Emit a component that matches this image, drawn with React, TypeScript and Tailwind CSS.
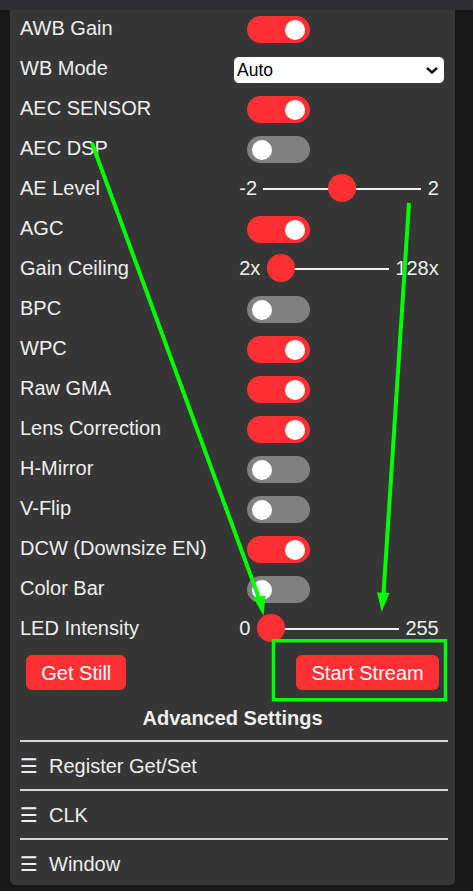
type Row =
  | { label: string; kind: 'toggle'; on: boolean }
  | { label: string; kind: 'select' }
  | { label: string; kind: 'range'; min: number; max: number; value: number; lo: string; hi: string };

const rows: Row[] = [
  { label: 'AWB Gain', kind: 'toggle', on: true },
  { label: 'WB Mode', kind: 'select' },
  { label: 'AEC SENSOR', kind: 'toggle', on: true },
  { label: 'AEC DSP', kind: 'toggle', on: false },
  { label: 'AE Level', kind: 'range', min: -2, max: 2, value: 0, lo: '-2', hi: '2' },
  { label: 'AGC', kind: 'toggle', on: true },
  { label: 'Gain Ceiling', kind: 'range', min: 0, max: 6, value: 0, lo: '2x', hi: '128x' },
  { label: 'BPC', kind: 'toggle', on: false },
  { label: 'WPC', kind: 'toggle', on: true },
  { label: 'Raw GMA', kind: 'toggle', on: true },
  { label: 'Lens Correction', kind: 'toggle', on: true },
  { label: 'H-Mirror', kind: 'toggle', on: false },
  { label: 'V-Flip', kind: 'toggle', on: false },
  { label: 'DCW (Downsize EN)', kind: 'toggle', on: true },
  { label: 'Color Bar', kind: 'toggle', on: false },
  { label: 'LED Intensity', kind: 'range', min: 0, max: 255, value: 0, lo: '0', hi: '255' },
];

const menus = ['Register Get/Set', 'CLK', 'Window'];

function Toggle({ on }: { on: boolean }) {
  return (
    <div
      className={
        'ml-[14px] mt-[1px] flex h-[27.5px] w-[62.5px] items-center rounded-full px-[5px] ' +
        (on ? 'justify-end bg-[#ff3034]' : 'justify-start bg-[#808080]')
      }
    >
      <div className="h-[20px] w-[20px] rounded-full bg-white" />
    </div>
  );
}

function Range({ min, max, value, lo, hi }: { min: number; max: number; value: number; lo: string; hi: string }) {
  return (
    <div className="flex min-w-0 flex-1 items-center">
      <span className="px-[6.25px] leading-[27.5px]">{lo}</span>
      <input
        type="range"
        min={min}
        max={max}
        defaultValue={value}
        className="m-0 h-[27.5px] min-w-0 flex-1 cursor-pointer appearance-none bg-transparent [&::-webkit-slider-runnable-track]:h-[2.5px] [&::-webkit-slider-runnable-track]:bg-[#efefef] [&::-webkit-slider-thumb]:mt-[-14.25px] [&::-webkit-slider-thumb]:h-[28px] [&::-webkit-slider-thumb]:w-[28px] [&::-webkit-slider-thumb]:appearance-none [&::-webkit-slider-thumb]:rounded-full [&::-webkit-slider-thumb]:bg-[#ff3034]"
      />
      <span className="px-[6.25px] leading-[27.5px]">{hi}</span>
    </div>
  );
}

export default function App() {
  return (
    <div className="relative h-[891px] w-full overflow-hidden bg-[#181818] font-['Liberation_Sans',Arial,sans-serif] text-[20px] text-[#efefef]">
      {/* Settings panel */}
      <div className="ml-[10px] w-[445px] rounded-b-[5px] bg-[#363636] px-[10px] pt-[9px]">
        {rows.map((r) => (
          <div key={r.label} className="flex h-[40px] items-center">
            <label className="w-[213px] shrink-0 pr-[12.5px] leading-[27.5px]">{r.label}</label>
            {r.kind === 'toggle' && <Toggle on={r.on} />}
            {r.kind === 'select' && (
              <div className="relative mt-[2px] flex-1">
                <select
                  defaultValue="auto"
                  className="block h-[27.5px] w-full appearance-none rounded-[6px] border-[1.25px] border-[#363636] bg-white pl-[3px] text-[17.5px] text-black outline-none"
                >
                  <option value="auto">Auto</option>
                  <option value="sunny">Sunny</option>
                  <option value="cloudy">Cloudy</option>
                  <option value="office">Office</option>
                  <option value="home">Home</option>
                </select>
                <svg
                  className="pointer-events-none absolute right-[7px] top-[11px]"
                  width="12"
                  height="7"
                  viewBox="0 0 12 7"
                  fill="none"
                >
                  <path d="M1 1L6 5.5L11 1" stroke="#111" strokeWidth="2.4" />
                </svg>
              </div>
            )}
            {r.kind === 'range' && <Range min={r.min} max={r.max} value={r.value} lo={r.lo} hi={r.hi} />}
          </div>
        ))}

        {/* Buttons */}
        <div className="flex justify-between">
          <button className="m-[6.25px] h-[35px] rounded-[6px] bg-[#ff3034] px-[15px] text-[20px] text-white">Get Still</button>
          <button className="m-[6.25px] h-[35px] rounded-[6px] bg-[#ff3034] px-[15px] text-[20px] text-white">Start Stream</button>
        </div>

        <div className="mt-[7px] h-[28px] text-center font-bold leading-[28px]">Advanced Settings</div>

        <div className="mt-[8px] flex flex-col">
          {menus.map((t, i) => (
            <div key={t} className="flex flex-col">
              <div className="mr-[-3px] h-[2px] bg-[#d6d6d6]" />
              <div
                className={
                  'flex items-center gap-[12px] pt-[11.5px] leading-[27.5px] ' +
                  (i === menus.length - 1 ? 'pb-[6px]' : 'pb-[8px]')
                }
              >
                <span className="w-[17px] font-['DejaVu_Sans',sans-serif] text-[20px]">☰</span>
                <span>{t}</span>
              </div>
            </div>
          ))}
        </div>
      </div>

      {/* top strip */}
      <div className="absolute left-0 right-0 top-0 h-[10px] bg-[#2d2d31]" />

      {/* green annotations */}
      <svg className="pointer-events-none absolute left-0 top-0" width="473" height="891" viewBox="0 0 473 891">
        <line x1="92" y1="143" x2="259" y2="598" stroke="#00ff00" strokeWidth="4" />
        <polygon points="253,597 265.5,595.5 263.5,616" fill="#00ff00" />
        <line x1="409" y1="203" x2="383.5" y2="594" stroke="#00ff00" strokeWidth="4" />
        <polygon points="377,592.5 389.5,593 381.7,612" fill="#00ff00" />
        <rect x="273.5" y="640.75" width="172" height="59" fill="none" stroke="#00ff00" strokeWidth="3.5" />
      </svg>
    </div>
  );
}
